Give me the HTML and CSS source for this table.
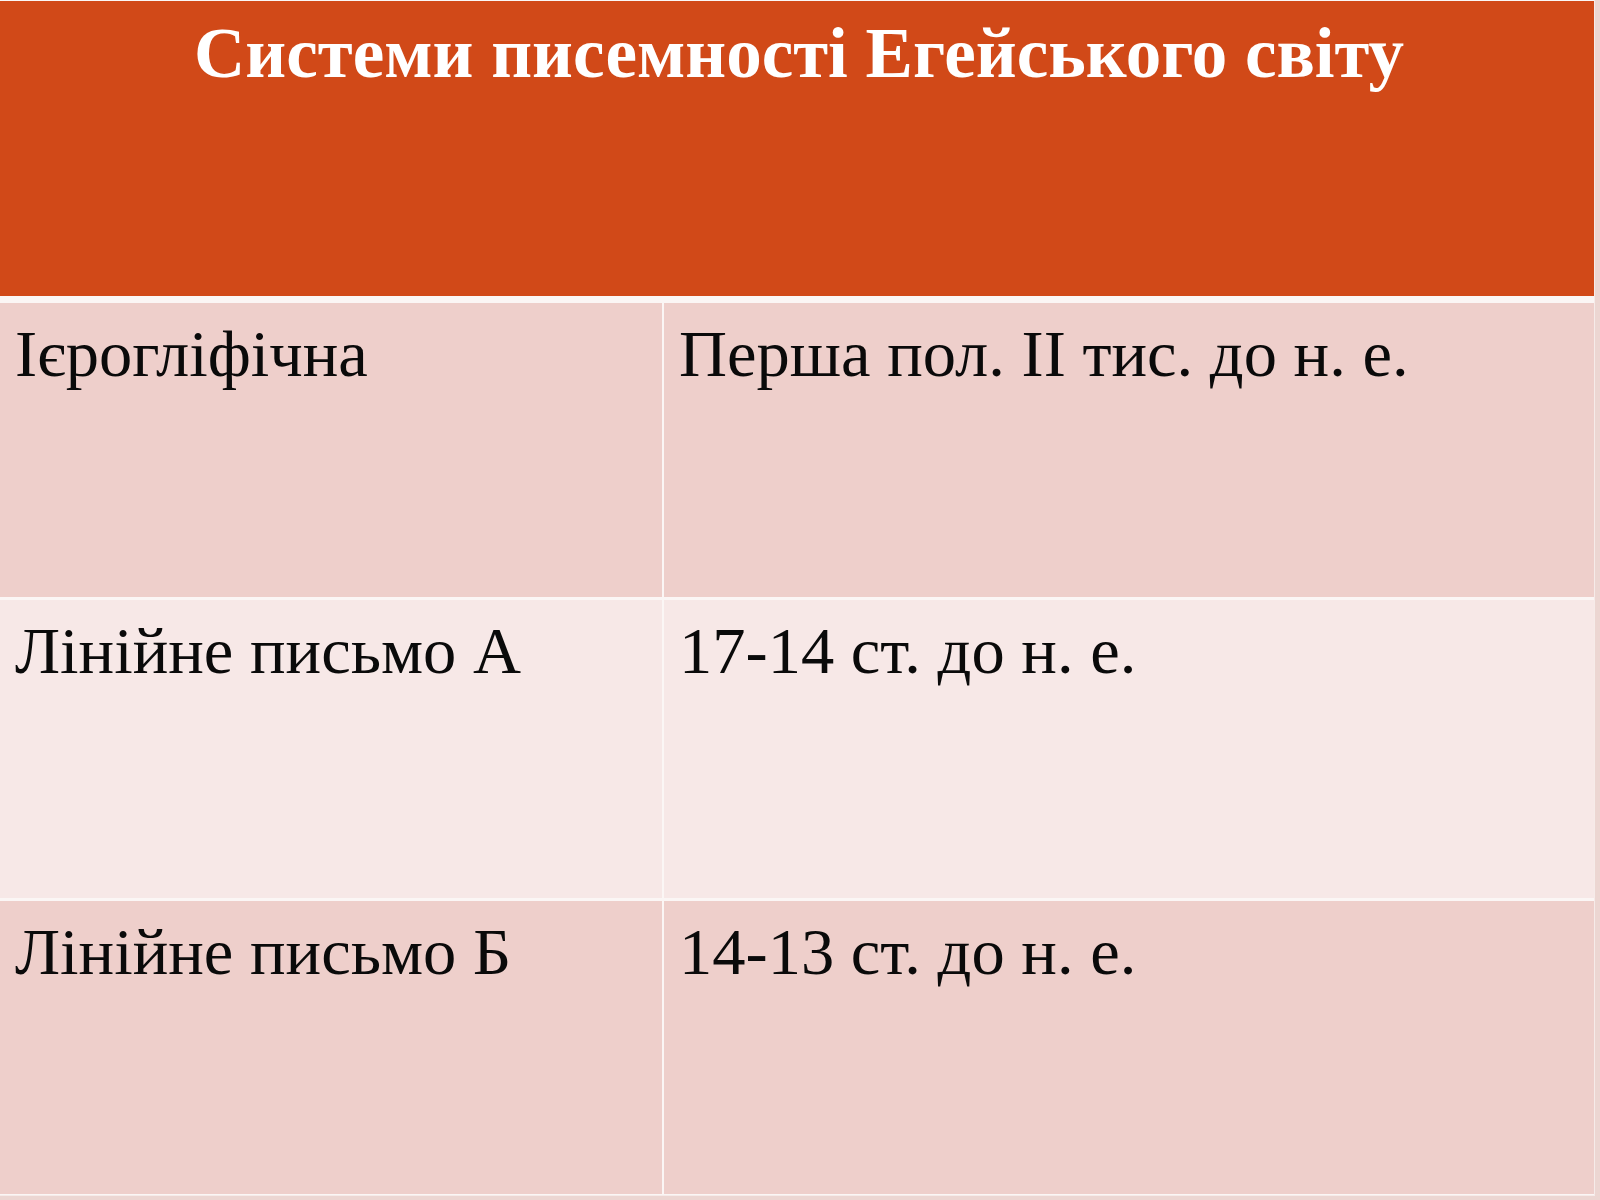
FILE: index.html
```html
<!DOCTYPE html>
<html lang="uk">
<head>
<meta charset="utf-8">
<title>Системи писемності Егейського світу</title>
<link rel="stylesheet" href="styles.css">
</head>
<body>
<div class="slide">
  <div class="table">
    <div class="head">Системи писемності Егейського світу</div>
    <div class="cell odd">Ієрогліфічна</div>
    <div class="cell odd">Перша пол. ІІ тис. до н. е.</div>
    <div class="cell even">Лінійне письмо А</div>
    <div class="cell even">17-14 ст. до н. е.</div>
    <div class="cell odd">Лінійне письмо Б</div>
    <div class="cell odd">14-13 ст. до н. е.</div>
  </div>
</div>
</body>
</html>
```

FILE: styles.css
```css
html, body {
  margin: 0;
  padding: 0;
}
body {
  width: 1600px;
  height: 1200px;
  background: #ecd6d2;
  overflow: hidden;
  font-family: "Liberation Serif", "Times New Roman", serif;
}
.slide {
  width: 1594px;
  height: 1194px;
  padding-top: 1px;
  background: #fbf6f5;
  border-right: 1px solid #f6ebe9;
  border-bottom: 1px solid #f6ebe9;
}
.table {
  display: grid;
  grid-template-columns: 662px 930px;
  grid-template-rows: 299px 294px 298px 293px;
  column-gap: 2px;
  row-gap: 3px;
}
.head {
  grid-column: 1 / 3;
  background: #d14918;
  color: #ffffff;
  font-weight: bold;
  font-size: 71px;
  text-align: center;
  line-height: 1;
  padding-top: 17px;
  padding-left: 4px;
  margin-bottom: 4px;
}
.cell {
  font-size: 66.5px;
  line-height: 1;
  color: #0a0a0a;
  padding: 18px 16px 0 15px;
}
.odd {
  background: #eecfcb;
}
.even {
  background: #f7e8e7;
}
```
